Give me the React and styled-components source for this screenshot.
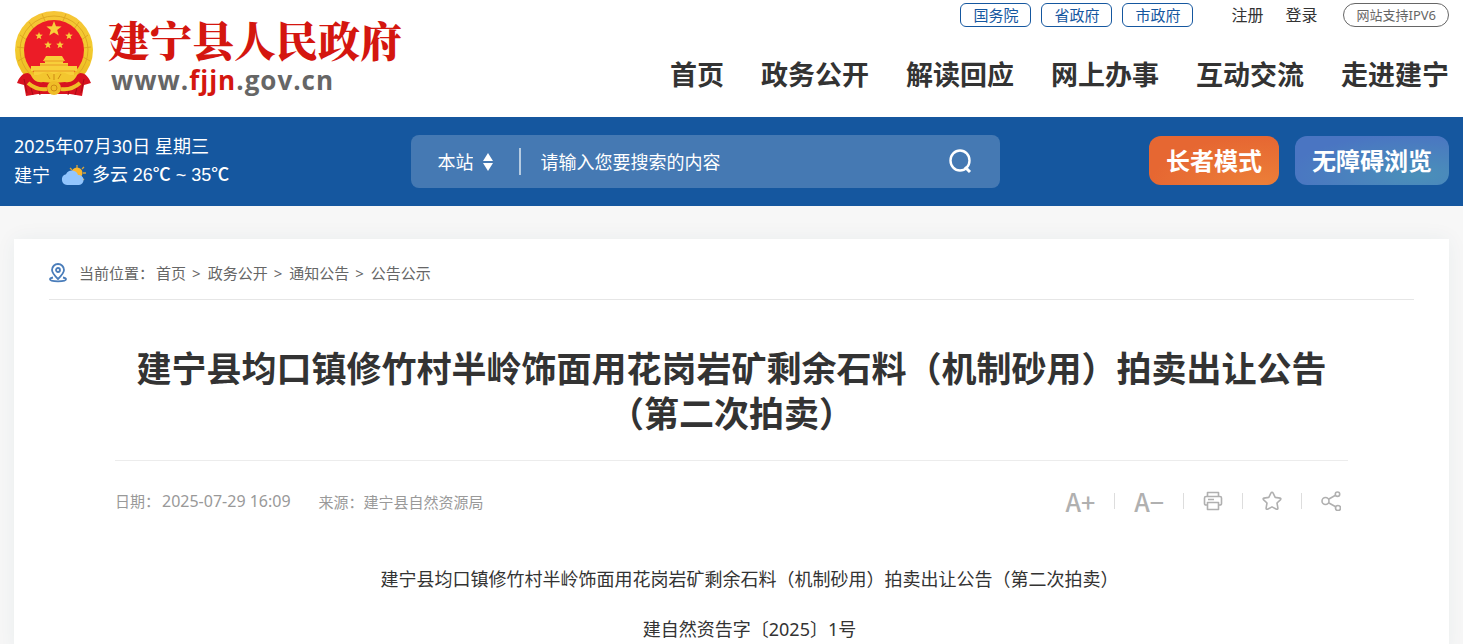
import { createGlobalStyle, styled } from "styled-components";

const SUBSITES = ["国务院", "省政府", "市政府"];
const MENU = ["首页", "政务公开", "解读回应", "网上办事", "互动交流", "走进建宁"];
const CRUMBS = ["首页", "政务公开", "通知公告", "公告公示"];

function star(cx, cy, r) {
    const points = [];
    for (let i = 0; i < 10; i++) {
        const radius = i % 2 ? r * 0.42 : r;
        const angle = (Math.PI / 5) * i - Math.PI / 2;
        points.push(`${(cx + radius * Math.cos(angle)).toFixed(1)},${(cy + radius * Math.sin(angle)).toFixed(1)}`);
    }
    return points.join(" ");
}

function Emblem() {
    return (
        <svg width="80" height="86" viewBox="0 0 80 86" aria-hidden="true">
            <defs>
                <linearGradient id="gold" x1="0" y1="0" x2="0" y2="1">
                    <stop offset="0" stopColor="#f6c536" />
                    <stop offset="0.5" stopColor="#f2cb2e" />
                    <stop offset="1" stopColor="#ecb31c" />
                </linearGradient>
            </defs>
            <circle cx="40" cy="39" r="39" fill="url(#gold)" />
            <circle cx="40" cy="39" r="34" fill="none" stroke="#dfa822" strokeWidth="1" />
            <path d="M6 24l8 6M3 36l8 1M4 50l7-4M15 11l5 7M28 3l3 7M74 24l-8 6M77 36l-8 1M76 50l-7-4M65 11l-5 7M52 3l-3 7" stroke="#dfa822" strokeWidth="1" />
            <circle cx="40" cy="39" r="30" fill="#ec1c27" />
            <g fill="#f8cf3a">
                <polygon points={star(40, 18, 8)} />
                <polygon points={star(25, 25, 4)} />
                <polygon points={star(55, 25, 4)} />
                <polygon points={star(34, 34, 4)} />
                <polygon points={star(46, 34, 4)} />
                <path d="M32 45h16l3 5H29zM31 50h18v2h5v3h9v5h-3v4H20v-4h-3v-5h9v-3h5z" />
            </g>
            <path d="M30 50h20M26 54h28M19 60h42" stroke="#e89a24" strokeWidth="1" />
            <path d="M14 62C8 62 5 67 3 72l7 2 2 11 12-2h32l12 2 2-11 7-2c-2-5-5-10-11-10l-14 9H28z" fill="#d8121f" />
            <path d="M16 61c4 5 9 3 13 1l5-1 6 2 6-2 5 1c4 2 9 4 13-1-2 9-8 11-13 10l-11 1-11-1c-5 1-11-1-13-10z" fill="#f3c62f" />
            <path d="M33 63l3 5M40 63v6M47 63l-3 5" stroke="#cf8a14" strokeWidth="1" />
            <circle cx="40" cy="77" r="7" fill="#efbd27" />
            <circle cx="40" cy="77" r="3" fill="none" stroke="#cf8a14" strokeWidth="1" />
            <path d="M14 72c7 6 13 7 19 6M66 72c-7 6-13 7-19 6" fill="none" stroke="#efbd27" strokeWidth="4" />
            <path d="M10 68l3 14M17 77l2 7M25 80l1 4M70 68l-3 14M63 77l-2 7M55 80l-1 4" stroke="#aa0c16" strokeWidth="1" />
        </svg>
    );
}

function CloudSun() {
    return (
        <svg width="26" height="22" viewBox="0 0 26 22" aria-hidden="true">
            <path d="M17 1v3M10 4l2 2M24 3l-2 2M23 9h3M22 14l2 2" stroke="#d6a43c" strokeWidth="1.3" />
            <circle cx="17" cy="9" r="5.5" fill="#fbb62d" />
            <path d="M7 21a5.500 5.500 0 0 1-1-10.800A6.500 6.500 0 0 1 18 11a5 5 0 0 1 1 10z" fill="#92c5fd" />
        </svg>
    );
}

function SearchIcon() {
    return (
        <svg width="26" height="26" viewBox="0 0 26 26" fill="none" stroke="#fff" strokeWidth="2.4" aria-hidden="true">
            <ellipse cx="12" cy="11.500" rx="9.500" ry="10" />
            <path d="M17 18l5 5" strokeWidth="3" />
        </svg>
    );
}

function PinIcon() {
    return (
        <svg width="20" height="20" viewBox="0 0 20 20" fill="none" stroke="#4a7dba" strokeWidth="1.8" aria-hidden="true">
            <path d="M9 16C5 12 3 10 3 7a6 6 0 0 1 12 0c0 3-2 5-6 9z" />
            <circle cx="9" cy="7" r="2" />
            <path d="M4 14.500c-2 .4-3 1-3 1.800C1 17.500 4 18.300 9 18.300s8-.8 8-2c0-.8-1-1.400-3-1.800" />
        </svg>
    );
}

function PrintIcon() {
    return (
        <svg width="20" height="20" viewBox="0 0 20 20" fill="none" stroke="#b0b0b0" strokeWidth="1.6" strokeLinejoin="round" aria-hidden="true">
            <path d="M4.500 5.500V1.500h11v4M4.500 14H3a1.500 1.500 0 0 1-1.500-1.500V7A1.500 1.500 0 0 1 3 5.500h14A1.500 1.500 0 0 1 18.500 7v5.500A1.500 1.500 0 0 1 17 14h-1.500M5 8.500h6" />
            <path d="M4.500 11.500h11v7h-11z" />
        </svg>
    );
}

function StarIcon() {
    return (
        <svg width="20" height="20" viewBox="0 0 20 20" fill="none" stroke="#b0b0b0" strokeWidth="1.6" strokeLinejoin="round" aria-hidden="true">
            <path d="M10 1.200q.7 0 1 .7l2.200 4.500 4.900.7q1.300.4.500 1.500L15 12l.9 5.200q0 1.400-1.400 1L10 15.900l-4.500 2.300q-1.400.4-1.400-1L5 12 1.400 8.600q-.8-1.100.5-1.500l4.900-.7L9 1.900q.3-.7 1-.7z" />
        </svg>
    );
}

function ShareIcon() {
    return (
        <svg width="20" height="20" viewBox="0 0 20 20" fill="none" stroke="#b0b0b0" strokeWidth="1.6" aria-hidden="true">
            <circle cx="4.500" cy="10" r="3.500" />
            <circle cx="16.500" cy="3.200" r="2.200" />
            <circle cx="17" cy="17" r="2.500" />
            <path d="M7.500 8.200l7-4M7.500 11.800l7.200 4" />
        </svg>
    );
}

export default function App() {
    return (
        <>
            <GlobalStyle />
            <Page>
                <Header>
                    <Brand href="#">
                        <Emblem />
                        <div>
                            <BrandName>建宁县人民政府</BrandName>
                            <BrandUrl>www.<em>fjjn</em>.gov.cn</BrandUrl>
                        </div>
                    </Brand>
                    <HeaderRight>
                        <TopLinks>
                            {SUBSITES.map((name) => <SubsiteLink href="#" key={name}>{name}</SubsiteLink>)}
                            <Account>
                                <a href="#">注册</a>
                                <a href="#">登录</a>
                            </Account>
                            <Ipv6 href="#">网站支持IPV6</Ipv6>
                        </TopLinks>
                        <Menu>
                            {MENU.map((name) => <a href="#" key={name}>{name}</a>)}
                        </Menu>
                    </HeaderRight>
                </Header>
                <Band>
                    <Weather>
                        <div>2025年07月30日 星期三</div>
                        <Forecast>
                            <span>建宁</span>
                            <CloudSun />
                            <span>多云 <b>26℃ ~ 35℃</b></span>
                        </Forecast>
                    </Weather>
                    <Search>
                        <Scope>
                            <select aria-label="搜索范围">
                                <option>本站</option>
                            </select>
                            <svg width="10" height="18" viewBox="0 0 10 18" fill="#fff" aria-hidden="true">
                                <path d="M5 0l5 8H0zM5 18l5-8H0z" />
                            </svg>
                        </Scope>
                        <input type="text" placeholder="请输入您要搜索的内容" aria-label="搜索" />
                        <button type="button" aria-label="搜索"><SearchIcon /></button>
                    </Search>
                    <Modes>
                        <ModeButton type="button" $elder>长者模式</ModeButton>
                        <ModeButton type="button">无障碍浏览</ModeButton>
                    </Modes>
                </Band>
                <Card>
                    <Crumbs>
                        <PinIcon />
                        <span>当前位置：</span>
                        {CRUMBS.map((name) => <a href="#" key={name}>{name}</a>)}
                    </Crumbs>
                    <Article>
                        <h1>建宁县均口镇修竹村半岭饰面用花岗岩矿剩余石料（机制砂用）拍卖出让公告<br />（第二次拍卖）</h1>
                        <Meta>
                            <span>日期：<time>2025-07-29 16:09</time></span>
                            <span>来源：建宁县自然资源局</span>
                            <Tools>
                                <button type="button">A+</button>
                                <button type="button">A−</button>
                                <button type="button" aria-label="打印"><PrintIcon /></button>
                                <button type="button" aria-label="收藏"><StarIcon /></button>
                                <button type="button" aria-label="分享"><ShareIcon /></button>
                            </Tools>
                        </Meta>
                        <Content>
                            <p>建宁县均口镇修竹村半岭饰面用花岗岩矿剩余石料（机制砂用）拍卖出让公告（第二次拍卖）</p>
                            <p>建自然资告字〔2025〕1号</p>
                        </Content>
                    </Article>
                </Card>
            </Page>
        </>
    );
}

const GlobalStyle = createGlobalStyle`
    * {
        box-sizing: border-box;
    }

    body {
        margin: 0;
        background: #f7f7f7;
        color: #333;
        font-family: "Noto Sans", "Noto Sans CJK SC", sans-serif;
    }

    a {
        color: inherit;
        text-decoration: none;
    }

    button, input, select {
        border: 0;
        padding: 0;
        background: none;
        color: inherit;
        font: inherit;
    }

    button {
        cursor: pointer;
    }

    svg {
        display: block;
        flex: none;
    }
`;

const Page = styled.div`
    min-height: 100vh;
    display: flex;
    flex-direction: column;
`;

const Header = styled.header`
    height: 117px;
    padding: 0 14px;
    background: #fff;
    display: flex;
    justify-content: space-between;
`;

const Brand = styled.a`
    padding-top: 11px;
    display: flex;
    align-items: flex-start;
    gap: 14px;
`;

const BrandName = styled.div`
    color: #d4160f;
    font-family: "Noto Serif CJK SC", "Noto Sans CJK SC", serif;
    font-size: 42px;
    font-weight: 900;
    line-height: 56px;
    white-space: nowrap;
`;

const BrandUrl = styled.div`
    padding-left: 3px;
    color: #666;
    font-family: "Open Sans", sans-serif;
    font-size: 26px;
    font-weight: 700;
    letter-spacing: 1px;
    line-height: 26px;

    em {
        color: #d4160f;
        font-style: normal;
    }
`;

const HeaderRight = styled.div`
    padding-top: 3px;
    display: flex;
    flex-direction: column;
    align-items: flex-end;
    white-space: nowrap;
`;

const TopLinks = styled.div`
    display: flex;
    align-items: center;
    gap: 10px;
    font-size: 15px;
    line-height: 22px;
`;

const SubsiteLink = styled.a`
    border: 1px solid #15579f;
    border-radius: 6px;
    padding: 0 12px;
    color: #15579f;
`;

const Account = styled.div`
    margin: 0 16px 0 28px;
    display: flex;
    gap: 22px;
    font-size: 16px;
`;

const Ipv6 = styled.a`
    border: 1px solid #666;
    border-radius: 12px;
    padding: 0 12px;
    color: #666;
    font-size: 13px;
`;

const Menu = styled.nav`
    padding-top: 28px;
    display: flex;
    gap: 37px;
    font-size: 27px;
    font-weight: 700;
    line-height: 40px;
`;

const Band = styled.div`
    height: 89px;
    padding: 0 14px;
    background: #15579f;
    color: #fff;
    display: grid;
    grid-template-columns: 27.7% 41% 1fr;
    align-items: center;
`;

const Weather = styled.div`
    padding-bottom: 2px;
    font-size: 18px;
    line-height: 28px;
`;

const Forecast = styled.div`
    display: flex;
    align-items: center;
    gap: 8px;

    svg {
        margin-left: 2px;
        margin-right: -2px;
    }

    b {
        font-family: "Liberation Sans", "Noto Sans CJK SC", sans-serif;
        font-weight: 500;
    }
`;

const Search = styled.form`
    height: 53px;
    border-radius: 8px;
    padding: 0 26px;
    background: #4579b3;
    display: flex;
    align-items: center;
    font-size: 18px;

    input {
        flex: 1;
        min-width: 0;
        padding-left: 19px;
        outline: 0;
    }

    input::placeholder {
        color: #fff;
        opacity: 1;
    }
`;

const Scope = styled.label`
    height: 27px;
    border-right: 2px solid #b5cbe1;
    padding-right: 26px;
    display: flex;
    align-items: center;
    gap: 10px;

    select {
        appearance: none;
        outline: 0;
    }
`;

const Modes = styled.div`
    padding-bottom: 2px;
    display: flex;
    justify-content: flex-end;
    gap: 16px;
`;

const ModeButton = styled.button`
    height: 49px;
    border-radius: 12px;
    padding: 0 17px 2px;
    background: ${({ $elder }) => $elder
        ? "radial-gradient(ellipse at 85% 100%, #ec7f38, #e66732 70%)"
        : "radial-gradient(ellipse at 80% 80%, #4a90b9, #4a75c2 75%)"};
    color: #fff;
    font-size: 24px;
    font-weight: 700;
    white-space: nowrap;
`;

const Card = styled.main`
    flex: 1;
    margin: 33px 14px 0;
    padding: 0 35px;
    background: #fff;
    box-shadow: 0 0 20px rgba(30, 80, 110, 0.06);
`;

const Crumbs = styled.nav`
    height: 61px;
    border-bottom: 1px solid #e6e6e6;
    padding-top: 7px;
    color: #666;
    display: flex;
    align-items: center;
    font-size: 15px;

    span {
        margin-left: 10px;
        margin-right: 2px;
    }

    a + a::before {
        content: ">";
        margin: 0 7px 0 6px;
    }
`;

const Article = styled.article`
    padding: 0 66px;

    h1 {
        margin: 0;
        border-bottom: 1px solid #ececec;
        padding: 46px 0 24px;
        font-size: 35px;
        line-height: 45px;
        text-align: center;
    }
`;

const Meta = styled.div`
    height: 80px;
    color: #999;
    display: flex;
    align-items: center;
    gap: 28px;
    font-size: 15px;

    time {
        margin-left: 2px;
        font-size: 16px;
    }
`;

const Tools = styled.div`
    margin-left: auto;
    padding-right: 7px;
    color: #b0b0b0;
    display: flex;
    align-items: center;

    button {
        display: flex;
        align-items: center;
        font-family: "Noto Sans CJK SC", sans-serif;
        font-size: 25px;
        font-weight: 500;
        line-height: 30px;
    }

    button + button::before {
        content: "";
        width: 1px;
        height: 16px;
        margin: 0 19px;
        background: #ddd;
    }
`;

const Content = styled.div`
    padding-top: 13px;
    font-size: 18px;
    line-height: 50px;
    text-align: center;
    text-indent: 36px;

    p {
        margin: 0;
    }
`;
